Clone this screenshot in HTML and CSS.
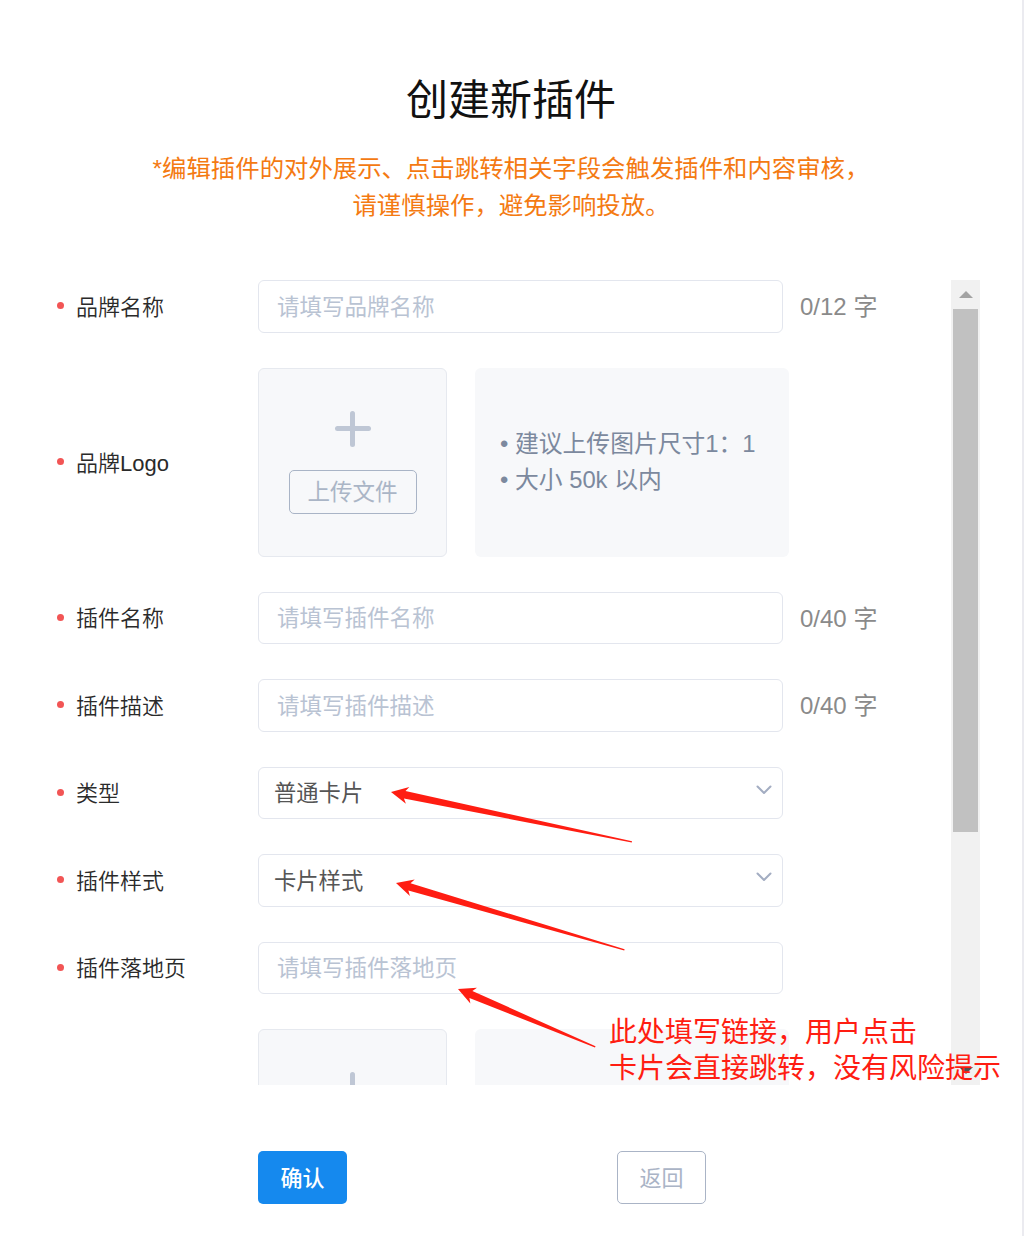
FILE: index.html
```html
<!DOCTYPE html>
<html lang="zh-CN">
<head>
<meta charset="utf-8">
<title>创建新插件</title>
<link rel="stylesheet" href="styles.css">
</head>
<body>
<div class="page">
  <h1 class="title">创建新插件</h1>
  <p class="notice">*编辑插件的对外展示、点击跳转相关字段会触发插件和内容审核，<br>请谨慎操作，避免影响投放。</p>

  <div class="panel">
    <div class="form">
      <div class="row">
        <div class="label"><span class="dot"></span>品牌名称</div>
        <div class="input placeholder">请填写品牌名称</div>
        <div class="count">0/12 字</div>
      </div>
      <div class="row">
        <div class="label"><span class="dot"></span>品牌Logo</div>
        <div class="upload">
          <span class="plus"></span>
          <span class="upload-btn">上传文件</span>
        </div>
        <div class="tips">
          <div class="tip">• 建议上传图片尺寸1：1</div>
          <div class="tip">• 大小 50k 以内</div>
        </div>
      </div>
      <div class="row">
        <div class="label"><span class="dot"></span>插件名称</div>
        <div class="input placeholder">请填写插件名称</div>
        <div class="count">0/40 字</div>
      </div>
      <div class="row">
        <div class="label"><span class="dot"></span>插件描述</div>
        <div class="input placeholder">请填写插件描述</div>
        <div class="count">0/40 字</div>
      </div>
      <div class="row">
        <div class="label"><span class="dot"></span>类型</div>
        <div class="input select">普通卡片
          <svg class="chev" width="16" height="10" viewBox="0 0 16 10"><path d="M1.5 1.5 L8 8 L14.5 1.5" fill="none" stroke="#a3adc2" stroke-width="2" stroke-linecap="round" stroke-linejoin="round"/></svg>
        </div>
      </div>
      <div class="row">
        <div class="label"><span class="dot"></span>插件样式</div>
        <div class="input select">卡片样式
          <svg class="chev" width="16" height="10" viewBox="0 0 16 10"><path d="M1.5 1.5 L8 8 L14.5 1.5" fill="none" stroke="#a3adc2" stroke-width="2" stroke-linecap="round" stroke-linejoin="round"/></svg>
        </div>
      </div>
      <div class="row">
        <div class="label"><span class="dot"></span>插件落地页</div>
        <div class="input placeholder">请填写插件落地页</div>
      </div>
      <div class="row">
        <div class="label"><span class="dot"></span>插件图片</div>
        <div class="upload">
          <span class="plus"></span>
          <span class="upload-btn">上传文件</span>
        </div>
        <div class="tips">
          <div class="tip">• 建议上传图片尺寸1：1</div>
          <div class="tip">• 大小 50k 以内</div>
        </div>
      </div>
    </div>
    <div class="scrollbar">
      <div class="sb-btn"><span class="tri-up"></span></div>
      <div class="sb-thumb"></div>
      <div class="sb-rest"></div>
      <div class="sb-btn"><span class="tri-down"></span></div>
    </div>
  </div>

  <div class="actions">
    <button class="btn primary">确认</button>
    <button class="btn ghost">返回</button>
  </div>

  <svg class="marks" width="1024" height="1236" viewBox="0 0 1024 1236">
    <g fill="#ff1d12">
      <polygon transform="translate(391 792) rotate(11.7)" points="0,0 17,-8.5 14,-3.8 246,-0.7 246,0.7 14,3.8 17,8.5"/>
      <polygon transform="translate(396 883) rotate(16.3)" points="0,0 17,-8.5 14,-3.8 238,-0.7 238,0.7 14,3.8 17,8.5"/>
      <polygon transform="translate(458 989) rotate(22.9)" points="0,0 17,-8.5 14,-3.8 149,-0.7 149,0.7 14,3.8 17,8.5"/>
    </g>
  </svg>
  <div class="annot">此处填写链接，用户点击<br>卡片会直接跳转，没有风险提示</div>
</div>
</body>
</html>
```

FILE: styles.css
```css
* { box-sizing: border-box; }
html, body { margin: 0; padding: 0; background: #fff; }
body {
  font-family: "Liberation Sans", "Noto Sans CJK SC", sans-serif;
  color: #222;
}
.page {
  position: relative;
  width: 1024px;
  height: 1236px;
  border-right: 2px solid #ebebf0;
  overflow: hidden;
  padding-top: 76px;
}
.title {
  margin: 0;
  text-align: center;
  font-size: 42px;
  line-height: 50px;
  font-weight: 400;
  color: #111;
}
.notice {
  margin: 24px 0 0;
  text-align: center;
  font-size: 24.4px;
  line-height: 37px;
  color: #f47a12;
}
.panel {
  display: flex;
  height: 805px;
  margin-top: 56px;
  margin-right: 42px;
}
.form {
  flex: 1;
  overflow: hidden;
  padding-left: 57px;
  display: flex;
  flex-direction: column;
  gap: 35px;
}
.row {
  display: flex;
  align-items: center;
  flex-shrink: 0;
}
.label {
  width: 201px;
  display: flex;
  align-items: center;
  font-size: 22px;
  font-weight: 350;
  color: #2a2a2a;
  padding-bottom: 3px;
}
.dot {
  width: 7px;
  height: 7px;
  border-radius: 50%;
  background: #f25555;
  margin-right: 12px;
  margin-top: 2px;
}
.input {
  position: relative;
  width: 525px;
  height: 52.5px;
  border: 1px solid #e3e6ee;
  border-radius: 6px;
  display: flex;
  align-items: center;
  font-size: 22.5px;
  background: #fff;
  padding-bottom: 3px;
}
.placeholder {
  padding-left: 18px;
  color: #b9c3d3;
}
.select {
  padding-left: 15px;
  font-size: 22.3px;
  color: #555;
}
.chev {
  position: absolute;
  right: 10px;
  top: 17px;
}
.count {
  margin-left: 17px;
  font-size: 24px;
  color: #8a8a8a;
  padding-bottom: 3px;
}
.upload {
  width: 189px;
  height: 189px;
  border: 1px solid #e6e9ef;
  border-radius: 6px;
  background: #f7f8fa;
  display: flex;
  flex-direction: column;
  align-items: center;
  padding-top: 42px;
}
.plus {
  position: relative;
  width: 36px;
  height: 36px;
}
.plus::before, .plus::after {
  content: "";
  position: absolute;
  background: #bfc7d5;
  border-radius: 3px;
}
.plus::before { left: 0; top: 15.5px; width: 36px; height: 5px; }
.plus::after { top: 0; left: 15.5px; width: 5px; height: 36px; }
.upload-btn {
  margin-top: 23px;
  width: 128px;
  height: 44px;
  border: 1px solid #a9b4c6;
  border-radius: 5px;
  display: flex;
  align-items: center;
  justify-content: center;
  font-size: 22.5px;
  color: #aab5c6;
  padding-bottom: 3px;
}
.tips {
  margin-left: 28px;
  width: 314px;
  height: 189px;
  border-radius: 6px;
  background: #f7f8fa;
  display: flex;
  flex-direction: column;
  justify-content: center;
  padding-left: 25px;
  font-size: 23.8px;
  line-height: 36px;
  color: #7c899e;
}
.scrollbar {
  width: 29px;
  height: 805px;
  background: #f1f1f1;
  display: flex;
  flex-direction: column;
}
.sb-btn {
  height: 29px;
  display: flex;
  align-items: center;
  justify-content: center;
}
.tri-up {
  width: 0; height: 0;
  border-left: 7px solid transparent;
  border-right: 7px solid transparent;
  border-bottom: 7px solid #a3a3a3;
}
.tri-down {
  width: 0; height: 0;
  border-left: 7px solid transparent;
  border-right: 7px solid transparent;
  border-top: 7px solid #505050;
}
.sb-thumb {
  height: 523px;
  margin: 0 2px;
  background: #c1c1c1;
}
.sb-rest { flex: 1; }
.actions {
  display: flex;
  margin-top: 66px;
  padding-left: 258px;
}
.btn {
  width: 89px;
  height: 53px;
  border-radius: 5px;
  font-family: "Liberation Sans", "Noto Sans CJK SC", sans-serif;
  font-size: 22px;
  padding: 0 0 3px;
  cursor: pointer;
}
.primary {
  background: #1589ee;
  border: none;
  color: #fff;
  font-weight: 500;
}
.ghost {
  margin-left: 270px;
  background: #fff;
  border: 1px solid #aab4c6;
  color: #aab4c6;
}
.marks {
  position: absolute;
  left: 0;
  top: 0;
  pointer-events: none;
}
.annot {
  position: absolute;
  left: 609px;
  top: 1012px;
  font-size: 28px;
  line-height: 36px;
  color: #ff1d12;
  white-space: nowrap;
  font-family: "Noto Sans CJK SC", sans-serif;
}
```
